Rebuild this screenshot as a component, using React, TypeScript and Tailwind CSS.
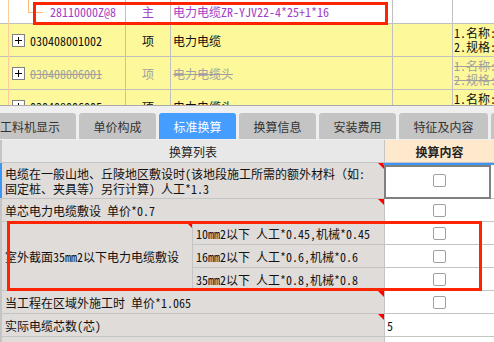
import React from 'react'

const cell = "font-['Noto_Sans_Mono_CJK_SC','Noto_Sans_CJK_SC',sans-serif] text-[12px] leading-[15px]"

const topRows = [
  { code: '28110000Z@8', type: '主', name: '电力电缆ZR-YJV22-4*25+1*16', main: true, h: 'h-[24px]' },
  { code: '030408001002', type: '项', name: '电力电缆', h: 'h-[33px]' },
  { code: '030408006001', type: '项', name: '电力电缆头', del: true, h: 'h-[33px]' },
  { code: '030408006005', type: '项', name: '电力电缆头', h: 'h-[33px]' },
]

const tabs = [
  { label: '工料机显示', w: 'w-[92px]' },
  { label: '单价构成', w: 'w-[77px]' },
  { label: '标准换算', w: 'w-[77px]', active: true },
  { label: '换算信息', w: 'w-[77px]' },
  { label: '安装费用', w: 'w-[77px]' },
  { label: '特征及内容', w: 'w-[89px]' },
  { label: '', w: 'w-[60px]' },
]

const subRows = [
  '10mm2以下 人工*0.45,机械*0.45',
  '16mm2以下 人工*0.6,机械*0.6',
  '35mm2以下 人工*0.8,机械*0.8',
]

function PlusBox() {
  return (
    <svg width="13" height="13" viewBox="0 0 13 13" className="shrink-0">
      <rect x="0.5" y="0.5" width="12" height="12" fill="#fff" stroke="#808080" />
      <path d="M3 6.5h7M6.5 3v7" stroke="#000" strokeWidth="1" />
    </svg>
  )
}

function Check() {
  return <div className="w-[13px] h-[13px] rounded-[2px] border border-[#a0a0a0] bg-white" />
}

function RedMark() {
  return (
    <div className="absolute top-0 right-0 w-0 h-0 border-t-[6px] border-t-[#ff0000] border-l-[6px] border-l-transparent" />
  )
}

export default function App() {
  return (
    <div className={`relative w-[494px] h-[342px] overflow-hidden bg-white text-[#111] ${cell}`}>
      {/* top grid */}
      <div className="relative h-[105px] overflow-hidden">
        {topRows.map((r) => (
          <div
            key={r.code}
            className={`grid grid-cols-[126px_45px_222px_60px_1fr] shrink-0 border-b border-[#c0c0c0] ${r.h} ${
              r.main ? 'bg-white text-[#a43cc4]' : r.del ? 'bg-[#fdf99b] text-[#a0a0a0]' : 'bg-[#fdf99b]'
            }`}
          >
            <div className="flex items-center border-r border-[#c0c0c0] whitespace-nowrap overflow-hidden">
              {r.main ? (
                <span className="pl-[50px]">{r.code}</span>
              ) : (
                <div className="flex items-center gap-[5px] pl-[12px]">
                  <PlusBox />
                  <span className={r.del ? 'line-through' : ''}>{r.code}</span>
                </div>
              )}
            </div>
            <div className="flex items-center justify-center border-r border-[#c0c0c0]">{r.type}</div>
            <div className={`flex items-center pl-[2px] border-r border-[#c0c0c0] whitespace-nowrap overflow-hidden ${r.del ? 'line-through' : ''}`}>
              {r.name}
            </div>
            <div className="border-r border-[#c0c0c0]" />
            <div className={`flex flex-col justify-center pl-[1px] leading-[14px] whitespace-nowrap overflow-hidden ${r.del ? 'line-through' : ''}`}>
              {!r.main && (
                <>
                  <span>1.名称:</span>
                  <span>2.规格:</span>
                </>
              )}
            </div>
          </div>
        ))}
        {/* tree lines */}
        <div className="absolute left-[8px] top-0 h-full w-px bg-[#ffcb98]" />
        <div className="absolute left-[28px] top-0 h-[12px] w-px bg-[#ffb878]" />
        <div className="absolute left-[28px] top-[12px] w-[15px] h-px bg-[#ffb878]" />
      </div>

      {/* tab strip */}
      <div className="h-[35px] border-t border-[#a8a8a8] bg-[#efefef] pt-[7px] font-['Noto_Sans_CJK_SC',sans-serif] text-[12px]">
        <div className="flex gap-[3px] ml-[-16px]">
          {tabs.map((t, i) => (
            <div
              key={i}
              className={`${t.w} shrink-0 h-[26px] rounded-t-[3px] flex items-center justify-center ${
                t.active ? 'bg-[#449dff] text-white' : 'bg-[#c4c4c4] text-[#333]'
              }`}
            >
              {t.label}
            </div>
          ))}
        </div>
      </div>

      {/* conversion table */}
      <div className="flex h-[23px] border-b border-[#c4c4c4] font-['Noto_Sans_CJK_SC',sans-serif] text-[12px]">
        <div className="w-[385px] shrink-0 border-l-2 border-r border-[#c4c4c4] bg-[#e8e8e8] flex items-center justify-center text-[#222]">
          换算列表
        </div>
        <div className="flex-1 bg-[#fee9cd] flex items-center justify-center font-bold text-[#222]">换算内容</div>
      </div>

      <div className="flex h-[36px] border-b border-[#c4c4c4]">
        <div className="relative w-[385px] shrink-0 border-l-2 border-l-[#3d96f5] border-r border-r-[#c4c4c4] bg-[#e0dcd9] flex flex-col justify-center pl-[3px]">
          <span>电缆在一般山地、丘陵地区敷设时(该地段施工所需的额外材料（如:</span>
          <span>固定桩、夹具等）另行计算) 人工*1.3</span>
          <RedMark />
        </div>
        <div className="relative flex-1 bg-white flex items-center justify-center">
          <Check />
          <div className="absolute top-0 left-[-2px] right-0 h-[2px] bg-[#3d96f5]" />
          <div className="absolute top-[2px] left-[-1px] w-[107px] bottom-[-1px] border-2 border-[#808080]" />
        </div>
      </div>

      <div className="flex h-[23px] border-b border-[#c4c4c4]">
        <div className="relative w-[385px] shrink-0 border-l-2 border-r border-[#c4c4c4] bg-[#e0dcd9] flex items-center pl-[3px]">
          单芯电力电缆敷设 单价*0.7
          <RedMark />
        </div>
        <div className="flex-1 bg-white flex items-center justify-center">
          <Check />
        </div>
      </div>

      <div className="flex h-[69px]">
        <div className="relative w-[193px] shrink-0 border-l-2 border-r border-b border-[#c4c4c4] bg-[#e0dcd9] flex items-center pl-[3px] whitespace-nowrap">
          室外截面35mm2以下电力电缆敷设
          <RedMark />
        </div>
        <div className="flex-1 flex flex-col">
          {subRows.map((s) => (
            <div key={s} className="flex h-[23px] border-b border-[#c4c4c4]">
              <div className="w-[192px] shrink-0 border-r border-[#c4c4c4] bg-[#e0dcd9] flex items-center pl-[3px] whitespace-nowrap">
                {s}
              </div>
              <div className="flex-1 bg-white flex items-center justify-center">
                <Check />
              </div>
            </div>
          ))}
        </div>
      </div>

      <div className="flex h-[23px] border-b border-[#c4c4c4]">
        <div className="relative w-[385px] shrink-0 border-l-2 border-r border-[#c4c4c4] bg-[#e0dcd9] flex items-center pl-[3px]">
          当工程在区域外施工时 单价*1.065
          <RedMark />
        </div>
        <div className="flex-1 bg-white flex items-center justify-center">
          <Check />
        </div>
      </div>

      <div className="flex h-[23px] border-b border-[#c4c4c4]">
        <div className="relative w-[385px] shrink-0 border-l-2 border-r border-[#c4c4c4] bg-[#e0dcd9] flex items-center pl-[3px]">
          实际电缆芯数(芯)
          <RedMark />
        </div>
        <div className="flex-1 bg-white flex items-center pl-[2px]">5</div>
      </div>

      <div className="flex h-[23px] border-b border-[#c4c4c4]">
        <div className="w-[385px] shrink-0 border-l-2 border-r border-[#c4c4c4] bg-[#e0dcd9]" />
        <div className="flex-1 bg-white" />
      </div>

      {/* annotation boxes */}
      <div className="absolute left-[33px] top-[2px] w-[355px] h-[23px] border-[3px] border-[#ff2400]" />
      <div className="absolute left-[7px] top-[221px] w-[475px] h-[70px] border-[3px] border-[#ff2400]" />
    </div>
  )
}
